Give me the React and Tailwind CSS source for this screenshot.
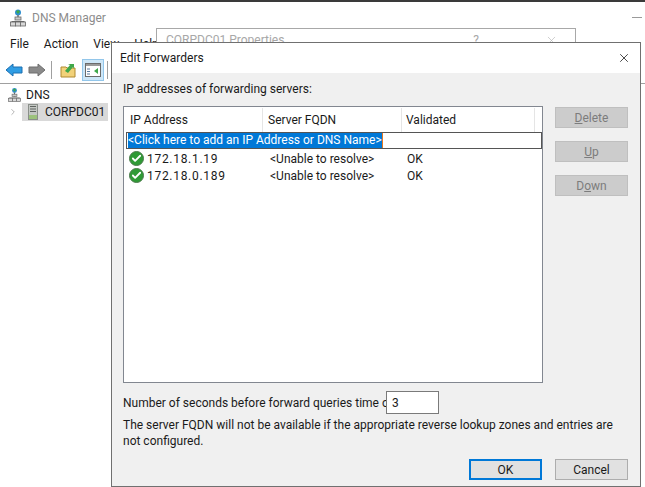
import { Check, ChevronRight, X } from "lucide-react";

const font = { fontFamily: 'Roboto, "Liberation Sans", sans-serif' };

function DnsIcon({ className }) {
  return (
    <svg viewBox="0 0 16 18" className={className}>
      <circle cx="8" cy="3.5" r="3" fill="#2f8fd0" />
      <path d="M6 2.5 8 1l2 1.5L8 5z" fill="#3fa84a" />
      <rect x="7.3" y="6" width="1.4" height="5" fill="#6b6b6b" />
      <rect x="5" y="8" width="6" height="3" fill="#c9c9c9" stroke="#6b6b6b" strokeWidth="0.8" />
      <path d="M1.5 12.5h13" stroke="#6b6b6b" fill="none" />
      <rect x="0.5" y="13" width="5" height="4" fill="#d8d8d8" stroke="#666" strokeWidth="0.8" />
      <rect x="10.5" y="13" width="5" height="4" fill="#d8d8d8" stroke="#666" strokeWidth="0.8" />
      <rect x="5.5" y="13" width="5" height="4" fill="#d8d8d8" stroke="#666" strokeWidth="0.8" />
    </svg>
  );
}

function ServerIcon() {
  return (
    <svg viewBox="0 0 10 16" className="w-[10px] h-[16px] shrink-0">
      <rect x="0.5" y="0.5" width="9" height="15" fill="#c4c8c4" stroke="#8a8f8a" />
      <rect x="2" y="2" width="6" height="1" fill="#5f6360" />
      <rect x="2" y="4.5" width="6" height="1" fill="#5f6360" />
      <rect x="2" y="7" width="6" height="1" fill="#5f6360" />
      <rect x="1" y="11" width="8" height="4" fill="#9cc27c" />
    </svg>
  );
}

function ArrowButton({ color, stroke, flip }) {
  return (
    <svg viewBox="0 0 18 14" className={`w-[18px] h-[14px] ${flip ? "-scale-x-100" : ""}`}>
      <path d="M1 7 8 1v3h9v6H8v3z" fill={color} stroke={stroke} strokeWidth="1" />
    </svg>
  );
}

function OkIcon() {
  return (
    <span className="w-[15px] h-[15px] rounded-full bg-[#2f9a35] border border-[#4c7a4c] flex items-center justify-center shrink-0">
      <Check className="w-[11px] h-[11px] text-white" strokeWidth={4} />
    </span>
  );
}

function SideButton({ children }) {
  return (
    <div className="w-[73px] h-[21px] bg-[#cccccc] border border-[#bfbfbf] flex items-center justify-center text-[#7c7c7c]">
      {children}
    </div>
  );
}

function ForwarderRow({ ip }) {
  return (
    <div className="flex items-center h-[17px] text-[#1a1a1a]">
      <div className="w-[139px] pl-[5px] flex items-center gap-[3px]">
        <OkIcon />
        <span className="tracking-[0.7px]">{ip}</span>
      </div>
      <div className="w-[138px] pl-[7px]">&lt;Unable to resolve&gt;</div>
      <div className="pl-[6px]">OK</div>
    </div>
  );
}

export default function App() {
  return (
    <div
      className="relative w-[645px] h-[487px] overflow-hidden bg-white text-[12px] leading-[16px] text-[#1a1a1a]"
      style={font}
    >
      <div className="h-[2px] bg-[#3a3a3a]" />

      {/* DNS Manager window */}
      <div className="flex items-center h-[27px] pl-[10px] mt-[2px] gap-[6px] text-[#8c8c8c]">
        <DnsIcon className="w-[16px] h-[18px]" />
        <span>DNS Manager</span>
        <div className="ml-auto mr-[3px] w-[10px] h-px bg-[#9a9a9a]" />
      </div>
      <div className="flex items-center h-[26px] pl-[10px] gap-[15px] text-[#1a1a1a]">
        <span>File</span>
        <span>Action</span>
        <span>View</span>
        <span>Help</span>
      </div>
      <div className="flex items-center h-[27px] pl-[5px] border-b border-[#a0a0a0]">
        <ArrowButton color="#2f9de4" stroke="#1d6fb0" />
        <div className="w-[5px]" />
        <ArrowButton color="#8a8a8a" stroke="#6e6e6e" flip />
        <div className="w-px h-[18px] bg-[#a0a0a0] ml-[5px] mr-[8px]" />
        <svg viewBox="0 0 16 16" className="w-[16px] h-[16px]">
          <path d="M1 5h5l1 1h8v9H1z" fill="#f2d27a" stroke="#b08a30" />
          <path d="M5 9 10 3l-2-1h6v5l-1-2-5 6z" fill="#3fa84a" />
        </svg>
        <div className="w-[22px] h-[22px] ml-[6px] bg-[#cde6f7] border border-[#92c6ea] flex items-center justify-center">
          <svg viewBox="0 0 16 14" className="w-[16px] h-[14px]">
            <rect x="0.5" y="0.5" width="15" height="13" fill="#fff" stroke="#6b6b6b" />
            <rect x="1" y="1" width="14" height="2" fill="#9a9a9a" />
            <path d="M2 6h3M2 8.5h3M2 11h3" stroke="#5a7ca0" />
            <path d="M13 5v6L9 8z" fill="#3fa84a" />
          </svg>
        </div>
        <div className="w-px h-[18px] bg-[#a0a0a0] ml-[3px]" />
      </div>
      <div className="w-[108px] pl-[8px] pt-[2px]">
        <div className="flex items-center h-[17px] gap-[5px]">
          <DnsIcon className="w-[13px] h-[16px]" />
          <span>DNS</span>
        </div>
        <div className="flex items-center h-[18px]">
          <ChevronRight className="w-[10px] h-[10px] text-[#a6a6a6] mr-[4px]" strokeWidth={2} />
          <div className="flex items-center flex-1 h-[18px] bg-[#d9d9d9] pl-[6px] gap-[7px] whitespace-nowrap">
            <ServerIcon />
            <span>CORPDC01</span>
          </div>
        </div>
      </div>

      {/* Properties dialog behind */}
      <div className="absolute left-[156px] top-[28px] w-[420px] h-[30px] bg-white border border-[#a8a8a8] text-[#a8a8a8] flex items-start pl-[9px] pt-[3px]">
        <span>CORPDC01 Properties</span>
        <span className="ml-auto mr-[66px]">?</span>
        <X className="w-[13px] h-[13px] mr-[17px] mt-[2px]" strokeWidth={1} />
      </div>

      {/* Edit Forwarders dialog */}
      <div className="absolute left-[111px] top-[42px] w-[530px] h-[445px] border border-[#707070] bg-[#f0f0f0] flex flex-col">
        <div className="h-[30px] bg-white shrink-0 flex items-center pl-[8px] pr-[9px]">
          <span>Edit Forwarders</span>
          <X className="ml-auto w-[14px] h-[14px] text-[#111]" strokeWidth={1.3} />
        </div>
        <div className="flex-1 flex flex-col pl-[11px] pr-[12px]">
          <div className="mt-[8px] h-[16px]">IP addresses of forwarding servers:</div>
          <div className="flex mt-[9px]">
            <div className="relative w-[420px] h-[277px] bg-white border border-[#828790]">
              <div className="flex h-[25px] items-stretch pt-[1px]">
                <div className="w-[139px] pl-[6px] border-r border-[#e5e5e5] flex items-center">IP Address</div>
                <div className="w-[139px] pl-[5px] border-r border-[#e5e5e5] flex items-center">Server FQDN</div>
                <div className="w-[133px] pl-[4px] border-r border-[#e5e5e5] flex items-center">Validated</div>
              </div>
              <div className="h-[17px] w-[416px] ml-[2px] mb-[1px] border border-[#555] flex items-center pl-[1px] whitespace-nowrap">
                <span className="bg-[#0078d7] text-white h-[15px] leading-[15px] border-r border-[#e8781e]">
                  &lt;Click here to add an IP Address or DNS Name&gt;
                </span>
              </div>
              <ForwarderRow ip="172.18.1.19" />
              <ForwarderRow ip="172.18.0.189" />
            </div>
            <div className="ml-[12px] pt-[1px] flex flex-col gap-[13px]">
              <SideButton><span><u>D</u>elete</span></SideButton>
              <SideButton><span><u>U</u>p</span></SideButton>
              <SideButton><span>D<u>o</u>wn</span></SideButton>
            </div>
          </div>
          <div className="flex items-center mt-[8px] h-[23px]">
            <span className="w-[263px] whitespace-nowrap">Number of seconds before forward queries time out:</span>
            <div className="w-[53px] h-[23px] bg-white border border-[#7a7a7a] pl-[5px] flex items-center">3</div>
          </div>
          <div className="mt-[3px] w-[490px]">
            The server FQDN will not be available if the appropriate reverse lookup zones and entries are not configured.
          </div>
          <div className="flex justify-end gap-[13px] mt-[10px]">
            <div className="w-[73px] h-[21px] bg-[#e1e1e1] border-2 border-[#0078d7] flex items-center justify-center">OK</div>
            <div className="w-[73px] h-[21px] bg-[#e1e1e1] border border-[#adadad] flex items-center justify-center">Cancel</div>
          </div>
        </div>
      </div>
    </div>
  );
}
